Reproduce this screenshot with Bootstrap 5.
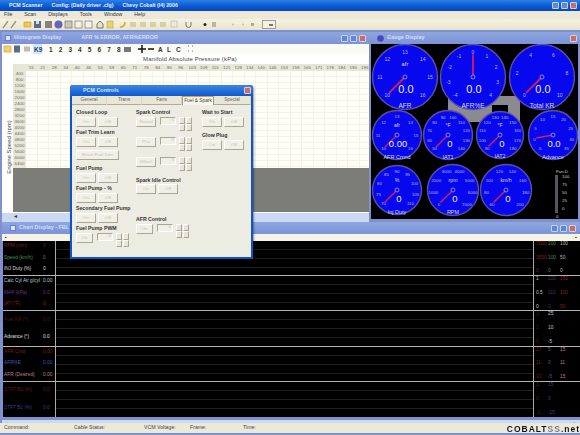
<!DOCTYPE html><html lang="en">
<head>
    <meta name="viewport" content="width=device-width, initial-scale=1.0">
    <meta charset="UTF-8">
    <title>PCM Scanner</title>
    <link rel="stylesheet" href="https://cdn.jsdelivr.net/npm/bootstrap@5.3.0/dist/css/bootstrap.min.css">
    <style>
        html, body { margin: 0; width: 580px; height: 435px; overflow: hidden; background: #8090cc; }
        body { font-family: "Liberation Sans", Arial, sans-serif; font-size: 6px; line-height: 1; }
        #app { width: 580px; height: 435px; filter: blur(.6px); }
        .main-title { height: 11px; background: linear-gradient(#2a7fe8, #0a56d0 60%, #0848b8); color: #e8f0ff; font-size: 5.2px; font-weight: 700; padding-left: 9px; gap: 9px; }
        .main-menu { height: 8px; background: #ece9d8; color: #333; font-size: 5.2px; padding-left: 4px; gap: 12px; }
        .main-tools { height: 11px; background: linear-gradient(#f6f3e2, #e9e4cc); position: relative; }
        .main-tools svg { display: block; }
        .mdi { height: 395px; background: #8090cc; position: relative; }
        .sub-win { position: absolute; background: #fff; overflow: hidden; }
        .sub-title { height: 12px; background: linear-gradient(#8ea6e0, #7b93d6); color: #d4ddf6; font-size: 5.4px; font-weight: 700; padding-left: 3px; gap: 3px; }
        .win-btns { margin-left: auto; gap: 2px; padding-right: 3px; }
        .win-btn { width: 7px; height: 7px; border-radius: 1px; background: #5f86d8; border: 1px solid #c7d4f2; }
        .win-btn.x { background: #d8685e; }
        .win-ico { width: 6px; height: 6px; background: #dbe4f8; border: 1px solid #5f7fd0; }
        .hist-win { left: 2px; top: 2px; width: 367px; height: 190px; }
        .hist-gap { margin-left: 17px; }
        .hist-tools { height: 10px; position: relative; background: #fbfbf6; }
        .axis-x { text-align: center; font-size: 6px; color: #444; height: 10px; padding: 2px 0 0 9px; letter-spacing: .15px; }
        .hist-body { height: 149px; position: relative; background: #fff; }
        .axis-y { position: absolute; left: -31px; top: 80px; width: 76px; transform: rotate(-90deg); font-size: 6px; color: #444; text-align: center; }
        .hist-grid { position: absolute; left: 11px; top: 0; width: 357px; border-collapse: collapse; table-layout: fixed; margin: 0; }
        .hist-grid td { height: 5.875px; padding: 0; font-size: 4.4px; line-height: 5px; border: 1px solid #f3f2e4; color: #666; text-align: center; overflow: hidden; background: #fffef8; white-space: nowrap; }
        .hist-grid tr:first-child td, .hist-grid td:first-child { background: #e8e6d6; border-color: #e8e6d6; }
        .hist-gray { position: absolute; left: 11px; right: 0; top: 104px; height: 44px; background: #7d7d77; }
        .hist-scroll { height: 9px; background: #cbd9f2; color: #333; font-size: 6px; padding-left: 12px; }
        .gauge-win { left: 369px; top: 2px; width: 211px; height: 190px; background: #8090cc; }
        .gauge-body { margin: 0 2px; height: 175px; background: #000; }
        .gauge-body svg { display: block; }
        .chart-win { left: 2px; top: 192px; width: 578px; height: 203px; background: #8090cc; }
        .chart-ruler { height: 7px; background: #f5f3e6; color: #222; font-size: 5px; padding: 0 3px; justify-content: space-between; }
        .chart-body { height: 176px; background: #000; margin-left: 1px; }
        .strip { height: 35.2px; border-bottom: 1px solid #b4b4b4; }
        .strip:last-child { border-bottom: 0; }
        .strip-left { width: 53px; border-right: 1px solid #a9a9a9; padding-left: 1px; font-size: 4.8px; }
        .strip-left > div { display: flex; }
        .strip-left span:first-child { width: 39px; white-space: nowrap; }
        .strip-mid { flex: 1; background: repeating-linear-gradient(#000 0 8px, #1e1e1e 8px 9px); }
        .strip-right { width: 47px; border-left: 1px solid #a9a9a9; font-size: 4.8px; padding: 1px 0 1px 2px; }
        .strip-right > div { display: flex; }
        .strip-right span { width: 12px; }
        .chart-hscroll { height: 6px; margin-top: 3px; background: #cbd9f2; color: #333; font-size: 5px; padding: 0 3px; justify-content: space-between; }
        .status-bar { height: 10px; margin-top: -2px; background: #ece9d8; color: #444; font-size: 5.2px; position: relative; }
        .status-bar span { width: 70px; }
        .watermark { position: absolute; right: 0; top: 2px; font-weight: 700; font-size: 8.5px; letter-spacing: 1px; color: #111; text-shadow: 0 0 1px #fff; white-space: nowrap; }
        .watermark em { font-style: normal; color: #777; }
        .pcm-dialog { position: absolute; left: 70px; top: 55px; width: 183px; height: 174px; background: #0c55cc; border-radius: 3px 3px 0 0; padding: 0 2px 2px; box-shadow: 1px 1px 2px #0006; }
        .pcm-title { height: 11px; color: #d8e4ff; font-size: 5.4px; font-weight: 700; padding-left: 13px; background: linear-gradient(#3a86ea, #1058cc); margin: 0 -2px; border-radius: 3px 3px 0 0; }
        .pcm-title .win-btns { padding-right: 2px; }
        .pcm-inner { background: #edece2; height: 161px; }
        .pcm-tabs { height: 9px; flex-wrap: nowrap; border-bottom: 1px solid #aaa; background: #e9e6d2; }
        .pcm-tabs .nav-link { padding: 1.5px 0 0; height: 9px; font-size: 4.8px; color: #666; border: 0; border-radius: 0; text-align: center; border-right: 1px solid #d8d4bd; background: transparent; margin: 0; white-space: nowrap; overflow: hidden; }
        .pcm-tabs .nav-link.active { background: #f7f6ec; color: #444; border-left: 1px solid #999; border-right: 1px solid #999; border-top: 1px solid #e39b3a; }
        .pcm-col1 { width: 60px; }
        .pcm-col2 { width: 66px; }
        .pcm-pane { padding: 4px 0 0 4px; }
        .grp-label { height: 7.5px; line-height: 7.5px; font-size: 5.2px; font-weight: 700; color: #333; white-space: nowrap; }
        .grp { margin-bottom: 2.5px; }
        .btn-pair { display: flex; gap: 2px; }
        .xp-btn { display: block; width: 20px; height: 10px; padding: 0; border-radius: 0; font-size: 4.4px; line-height: 8px; color: #c4c2b4; background: #f1f0e6; border: 1px solid; border-color: #fff #a8a695 #a8a695 #fff; }
        .xp-btn:disabled { color: #c4c2b4; background: #f1f0e6; border-color: #fff #a8a695 #a8a695 #fff; opacity: 1; }
        .xp-btn.wide { width: 43px; }
        .xp-btn.short { width: 17px; }
        .xp-field { width: 16px; height: 8px; background: #f1f0e6; border: 1px solid; border-color: #a8a695 #fff #fff #a8a695; font-size: 4.4px; color: #bbb; text-align: right; padding-right: 1px; }
        .xp-spin { display: grid; grid-template-columns: 6px 6px; grid-auto-rows: 7px; gap: 0 1px; margin-left: 3px; }
        .xp-spin i { background: #e7e5d8; border: 1px solid; border-color: #fff #a8a695 #a8a695 #fff; }
        .mt-trim { margin-top: 3px; }
        .sp-row { margin-bottom: 10px; height: 10px; }
        .sp-idle { margin-top: 8px; }
        .sp-afr { margin-top: 22px; }
        .fp-gap { margin-bottom: 5.5px; }
    </style>
</head>
<body>
<div id="app">
    <div class="main-title d-flex align-items-center">
        <span>PCM Scanner</span><span>Config: (Daily driver .cfg)</span><span>Chevy Cobalt (I4) 2006</span>
        <div class="win-btns d-flex"><div class="win-btn"></div><div class="win-btn"></div><div class="win-btn x"></div></div>
    </div>
    <div class="main-menu d-flex align-items-center">
        <span>File</span><span>Scan</span><span>Displays</span><span>Tools</span><span>Window</span><span>Help</span>
    </div>
    <div class="main-tools">
        <svg width="580" height="11" viewBox="0 0 580 11">
            <path d="M3 9 8 2M11 9 16 2" stroke="#9a9a80" stroke-width="1.4"/>
            <rect x="24" y="3" width="7" height="5" fill="#f2c94a" stroke="#b98f20" stroke-width=".5"/>
            <rect x="34" y="2" width="7" height="7" fill="#5a6a8a"/><rect x="36" y="2" width="3" height="3" fill="#d9dce8"/>
            <rect x="45" y="2" width="7" height="7" fill="#84847c"/>
            <circle cx="58.500" cy="5.500" r="4" fill="#6a62c0"/>
            <rect x="65" y="2" width="7" height="7" fill="#c8c6b4" stroke="#777" stroke-width=".7"/>
            <rect x="75" y="2" width="7" height="7" fill="#f4f2e6" stroke="#777" stroke-width=".7"/>
            <rect x="85" y="2" width="7" height="7" fill="#f4f2e6" stroke="#777" stroke-width=".7"/>
            <path d="M97 9V5l3-3 3 3v4z" fill="#e7e3ca" stroke="#555" stroke-width=".8"/>
            <rect x="107" y="2" width="6" height="7" fill="#e6d27a" stroke="#b6a24c" stroke-width=".6"/>
            <path d="M120 8c3 0 5-2 5-5" fill="none" stroke="#d8a820" stroke-width="1.6"/>
            <rect x="130" y="3" width="6" height="5" fill="#d6d0a6"/><rect x="140" y="3" width="6" height="5" fill="#d6d0a6"/>
            <rect x="150" y="3" width="6" height="5" fill="#d6d0a6"/><rect x="160" y="3" width="6" height="5" fill="#d6d0a6"/>
            <rect x="171" y="2" width="6" height="6" fill="#eeeadb" stroke="#aaa" stroke-width=".6"/>
            <path d="M186 3v3a2.500 2.500 0 0 0 5 0V3" fill="none" stroke="#777" stroke-width="1"/>
            <circle cx="205" cy="5.500" r="1.500" fill="#222"/><rect x="212" y="3" width="4" height="5" fill="#bbb59a"/>
            <circle cx="233" cy="5.500" r="1" fill="#c9c4a0"/><circle cx="243" cy="5.500" r="1" fill="#c9c4a0"/><rect x="251" y="4" width="3" height="3" fill="#b3ac80"/>
            <rect x="262.500" y="1.500" width="13" height="8" fill="#f5f2e1" stroke="#888" stroke-width=".8"/>
            <rect x="269" y="5" width="4" height="2" fill="#777"/>
        </svg>
    </div>
    <div class="mdi">
        <div class="sub-win hist-win">
            <div class="sub-title d-flex align-items-center">
                <div class="win-ico"></div><span>Histogram Display</span><span class="hist-gap">AFR % ERROR, AFR%ERROR</span>
                <div class="win-btns d-flex"><div class="win-btn"></div><div class="win-btn"></div><div class="win-btn x"></div></div>
            </div>
            <div class="hist-tools">
                <svg width="367" height="10" viewBox="0 0 367 10">
                    <rect x="2" y="2" width="7" height="6" fill="#f2d070" stroke="#b98f20" stroke-width=".5"/>
                    <rect x="12" y="1.500" width="6" height="7" fill="#5a6a8a"/>
                    <rect x="22" y="2.500" width="6" height="5" fill="#bbb"/>
                    <rect x="31" y="0" width="9" height="10" fill="#d5e4f4"/>
                    <text x="32" y="7.500" font-size="6.500" font-weight="700" fill="#24406e">K9</text>
                    <text x="49" y="7.500" font-size="6.500" font-weight="700" fill="#333" id="hist-nums"></text>
                    <rect x="122" y="3" width="7" height="5" fill="#777"/>
                    <path d="M136 5h8M140 1v8" stroke="#111" stroke-width="1.500"/>
                    <path d="M146 5h6" stroke="#111" stroke-width="1.500"/>
                    <text x="156" y="8" font-size="6.500" font-weight="700" fill="#333">A</text>
                    <text x="165" y="8" font-size="6.500" font-weight="700" fill="#333">L</text>
                    <text x="174" y="8" font-size="6.500" font-weight="700" fill="#333">C</text>
                    <path d="M186 2h1M190 2h1M186 7h1M190 7h1" stroke="#777" stroke-width="1"/>
                </svg>
            </div>
            <div class="axis-x">Manifold Absolute Pressure (kPa)</div>
            <div class="hist-body">
                <div class="axis-y">Engine Speed (rpm)</div>
                <table class="hist-grid" id="hist-grid"></table>
                <div class="hist-gray"></div>
            </div>
            <div class="hist-scroll">◂</div>
        </div>
        <div class="sub-win gauge-win">
            <div class="sub-title d-flex align-items-center ps-2">
                <svg width="7" height="7" viewBox="0 0 7 7"><circle cx="3.500" cy="3.500" r="3.300" fill="#4a48c0"/></svg>
                <span>Gauge Display</span>
                <div class="win-btns d-flex"><div class="win-btn x"></div></div>
            </div>
            <div class="gauge-body"><svg id="gauges" width="207" height="175" viewBox="371 44 207 175"></svg></div>
        </div>
        <div class="sub-win chart-win">
            <div class="sub-title d-flex align-items-center ps-2">
                <div class="win-ico"></div><span>Chart Display - FBL</span>
                <div class="win-btns d-flex pe-1"><div class="win-btn"></div><div class="win-btn"></div><div class="win-btn x"></div></div>
            </div>
            <div class="chart-ruler d-flex align-items-center"><span>▪</span><span>▪</span></div>
            <div class="chart-body" id="chart-body"></div>
            <div class="chart-hscroll d-flex align-items-center"><span>◂</span><span>▸</span></div>
        </div>
        <div class="pcm-dialog">
            <div class="pcm-title d-flex align-items-center">
                <span>PCM Controls</span>
                <div class="win-btns d-flex"><div class="win-btn x"></div></div>
            </div>
            <div class="pcm-inner">
                <ul class="nav pcm-tabs">
                    <li class="nav-item" style="width:35px"><a class="nav-link" href="#">General</a></li>
                    <li class="nav-item" style="width:35px"><a class="nav-link" href="#">Trans</a></li>
                    <li class="nav-item" style="width:40px"><a class="nav-link" href="#">Fans</a></li>
                    <li class="nav-item" style="width:32px"><a class="nav-link active" href="#">Fuel &amp; Spark</a></li>
                    <li class="nav-item" style="width:37px"><a class="nav-link" href="#">Special</a></li>
                </ul>
                <div class="pcm-pane d-flex">
                    <div class="pcm-col1">
                        <div class="grp">
                            <div class="grp-label">Closed Loop</div>
                            <div class="btn-pair"><button class="btn xp-btn" disabled>On</button><button class="btn xp-btn" disabled>Off</button></div>
                        </div>
                        <div class="grp fp-gap">
                            <div class="grp-label">Fuel Trim Learn</div>
                            <div class="btn-pair"><button class="btn xp-btn" disabled>On</button><button class="btn xp-btn" disabled>Off</button></div>
                            <button class="btn xp-btn wide mt-trim" disabled>Reset Fuel Trim</button>
                        </div>
                        <div class="grp">
                            <div class="grp-label">Fuel Pump</div>
                            <div class="btn-pair"><button class="btn xp-btn" disabled>On</button><button class="btn xp-btn" disabled>Off</button></div>
                        </div>
                        <div class="grp">
                            <div class="grp-label">Fuel Pump - %</div>
                            <div class="btn-pair"><button class="btn xp-btn" disabled>On</button><button class="btn xp-btn" disabled>Off</button></div>
                        </div>
                        <div class="grp">
                            <div class="grp-label">Secondary Fuel Pump</div>
                            <div class="btn-pair"><button class="btn xp-btn" disabled>On</button><button class="btn xp-btn" disabled>Off</button></div>
                        </div>
                        <div class="grp">
                            <div class="grp-label">Fuel Pump PWM</div>
                            <div class="d-flex align-items-start"><button class="btn xp-btn short" disabled>On</button><div class="xp-field ms-1">0</div><div class="xp-spin"><i></i><i></i><i></i><i></i></div></div>
                        </div>
                    </div>
                    <div class="pcm-col2">
                        <div class="grp-label">Spark Control</div>
                        <div class="sp-row d-flex align-items-start"><button class="btn xp-btn" disabled>Retard</button><div class="xp-field ms-1">0</div><div class="xp-spin"><i></i><i></i><i></i><i></i></div></div>
                        <div class="sp-row d-flex align-items-start"><button class="btn xp-btn" disabled>Pha</button><div class="xp-field ms-1">0</div><div class="xp-spin"><i></i><i></i><i></i><i></i></div></div>
                        <div class="sp-row d-flex align-items-start"><button class="btn xp-btn" disabled>Wheel</button><div class="xp-field ms-1">0</div><div class="xp-spin"><i></i><i></i><i></i><i></i></div></div>
                        <div class="grp-label sp-idle">Spark Idle Control</div>
                        <div class="btn-pair"><button class="btn xp-btn" disabled>On</button><button class="btn xp-btn" disabled>Off</button></div>
                        <div class="grp-label sp-afr">AFR Control</div>
                        <div class="d-flex align-items-start"><button class="btn xp-btn short" disabled>On</button><div class="xp-field ms-1">0</div><div class="xp-spin"><i></i><i></i><i></i><i></i></div></div>
                    </div>
                    <div>
                        <div class="grp-label">Wait to Start</div>
                        <div class="btn-pair fp-gap"><button class="btn xp-btn" disabled>On</button><button class="btn xp-btn" disabled>Off</button></div>
                        <div class="grp-label">Glow Plug</div>
                        <div class="btn-pair"><button class="btn xp-btn" disabled>On</button><button class="btn xp-btn" disabled>Off</button></div>
                    </div>
                </div>
            </div>
        </div>
    </div>
    <div class="status-bar d-flex align-items-center ps-1">
        <span>Command:</span><span>Cable Status:</span><span style="width:46px">VCM Voltage:</span><span style="width:53px">Frame:</span><span>Time:</span>
        <div class="watermark">COBALT<em>SS</em>.net</div>
    </div>
</div>
<script src="https://cdn.jsdelivr.net/npm/bootstrap@5.3.0/dist/js/bootstrap.bundle.min.js"></script>
<script>
    // histogram toolbar digits and grid
    document.getElementById("hist-nums").innerHTML = [1,2,3,4,5,6,7,8].map((n, i) =>
        `<tspan x="${47 + i * 9.7}">${n}</tspan>`).join("");

    const kpa = [15,21,28,34,40,46,53,59,65,71,78,84,90,96,103,109,115,121,128,134,140,146,153,159,165,171,178,184,190,196];
    let rows = `<colgroup><col style="width:12px">${kpa.map(() => '<col style="width:11.5px">').join("")}</colgroup>`;
    rows += `<tr><td></td>${kpa.map(k => `<td>${k}</td>`).join("")}</tr>`;
    for (let r = 400; r <= 6800; r += 400) {
        rows += `<tr><td>${r}</td>${kpa.map(() => "<td></td>").join("")}</tr>`;
    }
    document.getElementById("hist-grid").innerHTML = rows;

    // gauges: cx, cy, r, labels, unit, value, name, needle angle from top
    const gaugeData = [
        [405, 77, 33, [10,11,12,13,14,15,16], "afr", "0.0", "AFR", -135],
        [473, 77, 33, [-4,-3,-2,-1,0,1,2,3,4], "", "0.0", "AFR%E", 0],
        [542, 77, 33, [0,2,4,6,8,10], "", "0.0", "Total KR", -135],
        [397, 135, 25, [10,11,12,13,14,15,16], "afr", "0.00", "AFR Cmnd", -135],
        [448, 135, 25, [50,60,70,80,90,100,110,120,130,140], "°F", "0", "IAT1", -135],
        [500, 135, 24, [90,100,110,120,130,140,150,160,170,180], "°F", "0", "IAT2", -135],
        [553, 135, 25, [-5,0,5,10,15,20,25,30,35], "", "0.0", "Advance", -100],
        [397, 190, 25, [70,75,80,85,90,95,100,105,110], "%", "0", "Inj Duty", -135],
        [453, 190, 26, [0,1000,2000,3000,4000,5000,6000,7000], "rpm", "0", "RPM", -135],
        [506, 190, 26, [60,80,100,120,140,160,180,200], "km/h", "0", "", -135]
    ];
    let svg = '<path d="M448 96h72v26h-72z" fill="#8a8a90"/><rect x="492" y="105" width="16" height="8" fill="#000"/>';
    gaugeData.forEach(([cx, cy, r, labels, unit, val, name, ang]) => {
        const small = r < 30;
        const fs = small ? 4.4 : 5;
        svg += `<circle cx="${cx}" cy="${cy}" r="${r - 0.5}" fill="#0808ee" stroke="#5a50a8" stroke-width="1.4"/>`;
        labels.forEach((l, i) => {
            const a = (-135 + 270 * i / (labels.length - 1)) * Math.PI / 180;
            const lr = r * 0.76;
            svg += `<text x="${(cx + Math.sin(a) * lr).toFixed(1)}" y="${(cy - Math.cos(a) * lr + 2).toFixed(1)}" font-size="${fs}" fill="#b4bcf4" text-anchor="middle">${l}</text>`;
        });
        if (unit) svg += `<text x="${cx}" y="${cy - r * 0.32}" font-size="${fs + 0.8}" fill="#d0d6ff" text-anchor="middle">${unit}</text>`;
        const na = ang * Math.PI / 180;
        svg += `<line x1="${cx}" y1="${cy}" x2="${(cx + Math.sin(na) * r * 0.68).toFixed(1)}" y2="${(cy - Math.cos(na) * r * 0.68).toFixed(1)}" stroke="#d81e5a" stroke-width="${small ? 1.4 : 1.8}"/>`;
        svg += `<circle cx="${cx}" cy="${cy}" r="2" fill="#0808ee" stroke="#b8b8e8" stroke-width=".7"/>`;
        svg += `<text x="${cx + (val.length > 1 ? 1 : 2)}" y="${cy + r * 0.48}" font-size="${small ? 9.5 : 11}" fill="#e8ecff" text-anchor="middle">${val}</text>`;
        if (name) svg += `<text x="${cx}" y="${cy + r * 0.94}" font-size="${small ? 5.5 : 6.5}" fill="#d8deff" text-anchor="middle">${name}</text>`;
    });
    svg += '<text x="562" y="173" font-size="4.400" fill="#ccc" text-anchor="middle">Fan D</text>';
    svg += '<rect x="555" y="175" width="3" height="38" fill="#55555f"/>';
    [100, 75, 50, 25, 0].forEach((v, i) => {
        svg += `<text x="562" y="${178 + i * 8}" font-size="4.400" fill="#ccc">${v}</text>`;
    });
    svg += '<text x="556" y="218" font-size="4.400" fill="#ccc">0</text>';
    document.getElementById("gauges").innerHTML = svg;

    // chart strips
    const strips = [
        { left: [["RPM (rpm)", "0", "#7a2020"], ["Speed (km/h)", "0", "#3f9a50"], ["INJ Duty (%)", "0", "#ddd"]],
          right: [[["7000", "#8a2020"], ["200", "#4f8a50"], ["100", "#bbb"]], [["3500", "#8a2020"], ["100", "#4f8a50"], ["50", "#bbb"]], [["0", "#8a2020"], ["0", "#4f8a50"], ["0", "#bbb"]]] },
        { left: [["Calc Cyl Air g/cyl", "0.00", "#a8d0d0"], ["MAP (kPa)", "0.0", "#7a2a90"], ["IAT (°F)", "0", "#8a2020"]],
          right: [[["1", "#a8d0d0"], ["220", "#5a2a70"], ["150", "#8a2020"]], [["0.5", "#a8d0d0"], ["110", "#5a2a70"], ["100", "#8a2020"]], [["0", "#a8d0d0"], ["0", "#5a2a70"], ["50", "#8a2020"]]] },
        { left: [["Fuel KR (°)", "0.0", "#5a1818"], ["Advance (°)", "0.0", "#e0e0e0"]],
          right: [[["1", "#5a1818"], ["25", "#ccc"]], [["1", "#5a1818"], ["10", "#ccc"]], [["0", "#5a1818"], ["-5", "#ccc"]]] },
        { left: [["AFR Cmd", "0.00", "#7a1f1f"], ["AFR%E", "0.00", "#4a55b0"], ["AFR (Desired)", "0.00", "#c08080"]],
          right: [[["17", "#7a1f1f"], ["5", "#4a55b0"], ["15", "#c08080"]], [["11", "#7a1f1f"], ["0", "#4a55b0"], ["11", "#c08080"]], [["10", "#7a1f1f"], ["-5", "#4a55b0"], ["15", "#c08080"]]] },
        { left: [["STFT B1 (%)", "0.0", "#6a1a1a"], ["STFT B1 (%)", "0.0", "#3a3f90"]],
          right: [[["1", "#6a1a1a"], ["15", "#3a3f90"]], [["0", "#6a1a1a"], ["0", "#3a3f90"]], [["-1", "#6a1a1a"], ["-15", "#3a3f90"]]] }
    ];
    const cell = (t, c) => `<span style="color:${c}">${t}</span>`;
    document.getElementById("chart-body").innerHTML = strips.map(s => `
        <div class="strip d-flex">
            <div class="strip-left d-flex flex-column justify-content-around">${s.left.map(([n, v, c]) => `<div>${cell(n, c)}${cell(v, c)}</div>`).join("")}</div>
            <div class="strip-mid"></div>
            <div class="strip-right d-flex flex-column justify-content-between">${s.right.map(r => `<div>${r.map(([t, c]) => cell(t, c)).join("")}</div>`).join("")}</div>
        </div>`).join("");
</script>
</body>
</html>
